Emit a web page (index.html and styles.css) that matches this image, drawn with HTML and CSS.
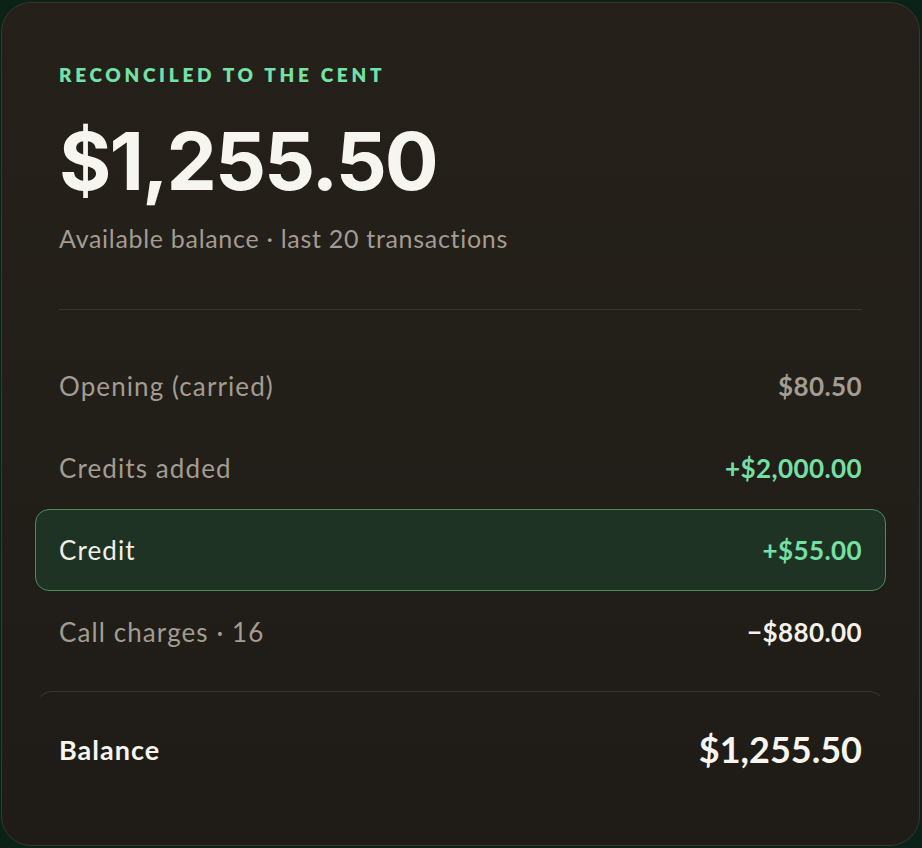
FILE: index.html
```html
<!DOCTYPE html>
<html lang="en">
<head>
<meta charset="utf-8">
<title>Balance</title>
<link rel="stylesheet" href="styles.css">
</head>
<body>
<main class="card">
  <div class="eyebrow">RECONCILED TO THE CENT</div>
  <div class="hero">$1,255.50</div>
  <div class="sub">Available balance · last 20 transactions</div>
  <div class="divider"></div>
  <ul class="rows">
    <li class="row"><span class="label">Opening (carried)</span><span class="amt muted">$80.50</span></li>
    <li class="row"><span class="label">Credits added</span><span class="amt pos">+$2,000.00</span></li>
    <li class="row row-hl"><span class="label">Credit</span><span class="amt pos">+$55.00</span></li>
    <li class="row"><span class="label">Call charges · 16</span><span class="amt neg">−$880.00</span></li>
  </ul>
  <div class="total">
    <span class="total-label">Balance</span>
    <span class="total-amt">$1,255.50</span>
  </div>
</main>
</body>
</html>
```
FILE: styles.css
```css
* { box-sizing: border-box; }
html, body { margin: 0; height: 100%; }
body {
  background: #0b2219;
  padding: 2px 2px 2px 1px;
  font-family: "Lato", "Noto Sans", sans-serif;
}
.card {
  height: 844px;
  border-radius: 30px;
  border: 1.5px solid #3b352a;
  background: linear-gradient(180deg, #25201a 0%, #1f1c17 100%);
  padding: 62px 57px 0 57px;
  display: flex;
  flex-direction: column;
}
.eyebrow {
  color: #72e2a6;
  font-size: 19px;
  font-weight: 800;
  letter-spacing: 3.7px;
  line-height: 20px;
}
.hero {
  margin-top: 28px;
  color: #f7f5ef;
  font-family: "Inter", "Lato", sans-serif;
  font-size: 80px;
  font-weight: 700;
  letter-spacing: -2px;
  line-height: 96px;
}
.sub {
  margin-top: 14px;
  color: #a29c92;
  font-size: 25px;
  letter-spacing: 0.7px;
  line-height: 30px;
}
.divider {
  margin-top: 56px;
  height: 1px;
  background: #3a3429;
}
.rows {
  list-style: none;
  margin: 35px -24px 0;
  padding: 0;
}
.row {
  height: 82px;
  display: flex;
  align-items: center;
  justify-content: space-between;
  padding: 0 23px;
  border: 1.5px solid transparent;
  border-radius: 14px;
  font-size: 26px;
}
.label { color: #a29c92; letter-spacing: 1.1px; }
.amt { font-weight: 700; letter-spacing: 0.4px; }
.muted { color: #a29c92; }
.pos { color: #74e0a4; }
.neg { color: #f4f1ea; }
.row-hl {
  background: #1f3324;
  border-color: #4d8a60;
}
.row-hl .label { color: #f2efe8; }
.total {
  margin: 18px -24px 0;
  height: 116px;
  padding: 0 23px 0;
  border: 1px solid;
  border-color: #3a3329 transparent transparent;
  border-radius: 18px;
  display: flex;
  align-items: center;
  justify-content: space-between;
}
.total-label {
  color: #f7f5ef;
  font-size: 27px;
  font-weight: 700;
  letter-spacing: 1px;
}
.total-amt {
  color: #f7f5ef;
  font-size: 36px;
  font-weight: 700;
}
```
